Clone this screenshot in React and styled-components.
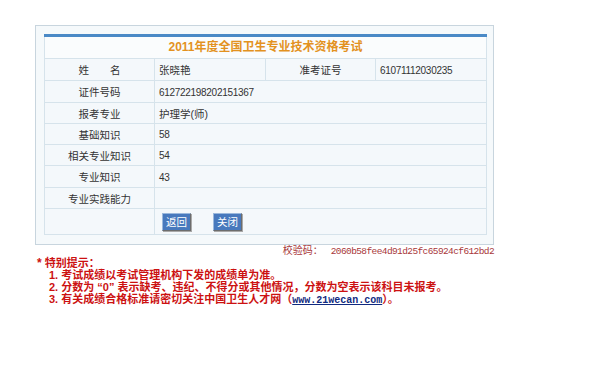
import React from 'react';
import styled, { createGlobalStyle } from 'styled-components';

const GlobalStyle = createGlobalStyle`
  body {
    margin: 0;
    background: #ffffff;
    font-family: "Liberation Sans", "Noto Sans CJK SC", sans-serif;
  }
`;

const Page = styled.div`
  padding: 25px 0 0 35px;
  width: 459px;
`;

const Frame = styled.div`
  border: 1px solid #c8d5de;
  background: #f5f9fb;
  padding: 8px 7px 9px 8px;
`;

const Sheet = styled.table`
  width: 442px;
  border-collapse: collapse;
  table-layout: fixed;
  border-top: 3px solid #4a89c6;
  background: #f4f8fb;
  font-size: 10.5px;
  color: #333333;
`;

const TitleCell = styled.td`
  height: 21px;
  padding: 0;
  text-align: center;
  background: #fafcfd;
  border-left: 1px solid #d6e3eb;
  border-right: 1px solid #d6e3eb;
  color: #e3921f;
  font-size: 12px;
  font-weight: bold;
  line-height: 21px;
`;

const Cell = styled.td`
  height: ${(p) => p.$h || 21}px;
  padding: 0 0 0 ${(p) => (p.$label ? 0 : 4)}px;
  border: 1px solid #d6e3eb;
  text-align: ${(p) => (p.$label ? 'center' : 'left')};
  white-space: nowrap;
`;

const Num = styled.span`
  font-size: 10px;
  letter-spacing: -0.3px;
`;

const Buttons = styled.div`
  display: flex;
  gap: 22px;
  padding-left: 3px;
`;

const Button = styled.button`
  width: 29px;
  height: 18px;
  padding: 0;
  background: #4879bd;
  color: #ffffff;
  font-family: "Liberation Sans", "Noto Sans CJK SC", sans-serif;
  font-size: 10.5px;
  line-height: 14px;
  border: 1px solid;
  border-color: #9bb8dc #6d6d6d #6d6d6d #9bb8dc;
  box-shadow: 1px 1px 0 #a9a9a9;
  cursor: pointer;
`;

const Checksum = styled.div`
  display: flex;
  justify-content: flex-end;
  align-items: baseline;
  gap: 8px;
  height: 12px;
  color: #a8373a;
  font-size: 10px;
  line-height: 11px;
`;

const Code = styled.span`
  font-family: "Liberation Mono", monospace;
  font-size: 9.5px;
  letter-spacing: -0.6px;
`;

const Tips = styled.div`
  padding: 0 0 0 2px;
  color: #cc1111;
  font-size: 11px;
  font-weight: bold;
  line-height: 12px;
  white-space: nowrap;
`;

const TipHead = styled.div`
  display: flex;
  gap: 3px;
`;

const Star = styled.span`
  font-size: 12px;
`;

const TipLine = styled.div`
  padding-left: 12px;
`;

const Link = styled.a`
  color: #102a80;
  text-decoration: underline;
  font-family: "Liberation Mono", monospace;
  font-size: 10px;
  font-weight: bold;
`;

const rows = [
  { label: '证件号码', value: <Num>612722198202151367</Num>, h: 21 },
  { label: '报考专业', value: '护理学(师)', h: 20 },
  { label: '基础知识', value: <Num>58</Num>, h: 20 },
  { label: '相关专业知识', value: <Num>54</Num>, h: 20 },
  { label: '专业知识', value: <Num>43</Num>, h: 21 },
  { label: '专业实践能力', value: '', h: 20 },
];

export default function App() {
  return (
    <Page>
      <GlobalStyle />
      <Frame>
        <Sheet>
          <colgroup>
            <col style={{ width: 110 }} />
            <col style={{ width: 111 }} />
            <col style={{ width: 110 }} />
            <col style={{ width: 111 }} />
          </colgroup>
          <tbody>
            <tr>
              <TitleCell colSpan={4}>2011年度全国卫生专业技术资格考试</TitleCell>
            </tr>
            <tr>
              <Cell $label>姓　　名</Cell>
              <Cell>张晓艳</Cell>
              <Cell $label>准考证号</Cell>
              <Cell><Num>61071112030235</Num></Cell>
            </tr>
            {rows.map((r) => (
              <tr key={r.label}>
                <Cell $label $h={r.h}>{r.label}</Cell>
                <Cell colSpan={3} $h={r.h}>{r.value}</Cell>
              </tr>
            ))}
            <tr>
              <Cell $label $h={25}></Cell>
              <Cell colSpan={3} $h={25}>
                <Buttons>
                  <Button>返回</Button>
                  <Button>关闭</Button>
                </Buttons>
              </Cell>
            </tr>
          </tbody>
        </Sheet>
      </Frame>
      <Checksum>
        <span>校验码：</span>
        <Code>2060b58fee4d91d25fc65924cf612bd2</Code>
      </Checksum>
      <Tips>
        <TipHead>
          <Star>*</Star>
          <span>特别提示：</span>
        </TipHead>
        <TipLine>1. 考试成绩以考试管理机构下发的成绩单为准。</TipLine>
        <TipLine>2. 分数为 “0” 表示缺考、违纪、不得分或其他情况，分数为空表示该科目未报考。</TipLine>
        <TipLine>
          3. 有关成绩合格标准请密切关注中国卫生人才网（<Link href="#">www.21wecan.com</Link>）。
        </TipLine>
      </Tips>
    </Page>
  );
}
